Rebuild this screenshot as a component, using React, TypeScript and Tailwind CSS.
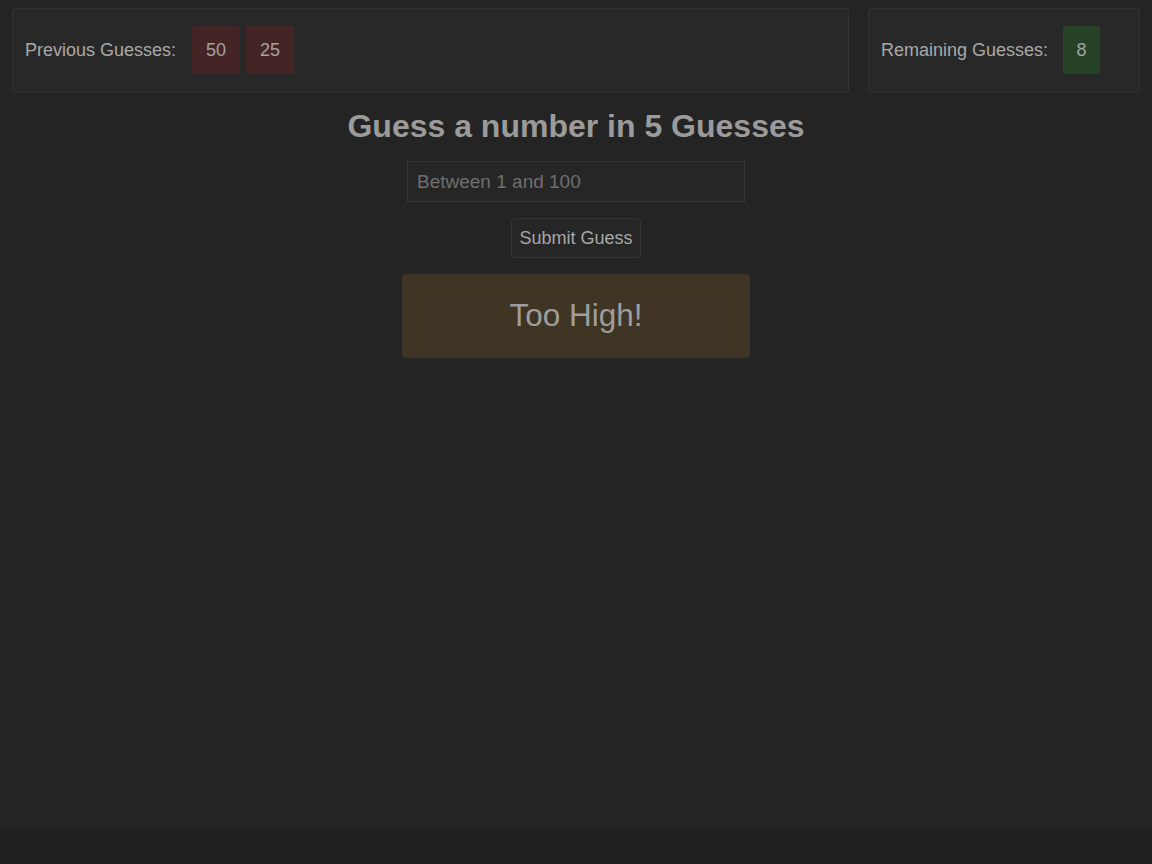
import React from "react";

export default function App() {
  return (
    <div className="min-h-screen bg-[#212121]" style={{ fontFamily: '"Liberation Sans", Arial, sans-serif' }}>
      <div className="h-[828px] bg-[#242424] pt-2 px-3 text-[#a3a3a3]">
        <div className="flex gap-[19px]">
          <div className="flex-1 h-[85px] flex items-start pt-[17px] px-3 border border-[#323232] rounded-[3px] bg-[#282828]">
            <span className="h-12 flex items-center text-[18px] text-[#a8a8a8]">Previous Guesses:</span>
            <div className="flex gap-[6px] ml-4">
              <div className="w-12 h-12 flex items-center justify-center bg-[#452426] rounded-[2px] text-[18px]">50</div>
              <div className="w-12 h-12 flex items-center justify-center bg-[#452426] rounded-[2px] text-[18px]">25</div>
            </div>
          </div>
          <div className="w-[272px] h-[85px] flex items-start pt-[17px] px-3 border border-[#323232] rounded-[3px] bg-[#282828]">
            <span className="h-12 flex items-center text-[18px] text-[#a8a8a8]">Remaining Guesses:</span>
            <div className="ml-[15px] w-[37px] h-12 flex items-center justify-center bg-[#264226] rounded-[2px] text-[18px]">8</div>
          </div>
        </div>
        <div className="flex flex-col items-center">
          <h1 className="mt-[14px] text-[32px] font-bold leading-[38px] text-[#9b9b9b]">Guess a number in 5 Guesses</h1>
          <input
            className="mt-4 w-[338px] h-[41px] px-[9px] bg-[#262626] border border-[#363636] text-[19px] outline-none placeholder:text-[#6f6f6f]"
            placeholder="Between 1 and 100"
          />
          <button className="mt-4 w-[130px] h-10 border border-[#353535] rounded-[4px] bg-[#262626] text-[18px] text-[#a8a8a8]">
            Submit Guess
          </button>
          <div className="mt-4 w-[348px] h-[84px] rounded-[4px] bg-[#403424] flex items-center justify-center text-[31.5px] text-[#9d9d9d]">
            Too High!
          </div>
        </div>
      </div>
    </div>
  );
}
